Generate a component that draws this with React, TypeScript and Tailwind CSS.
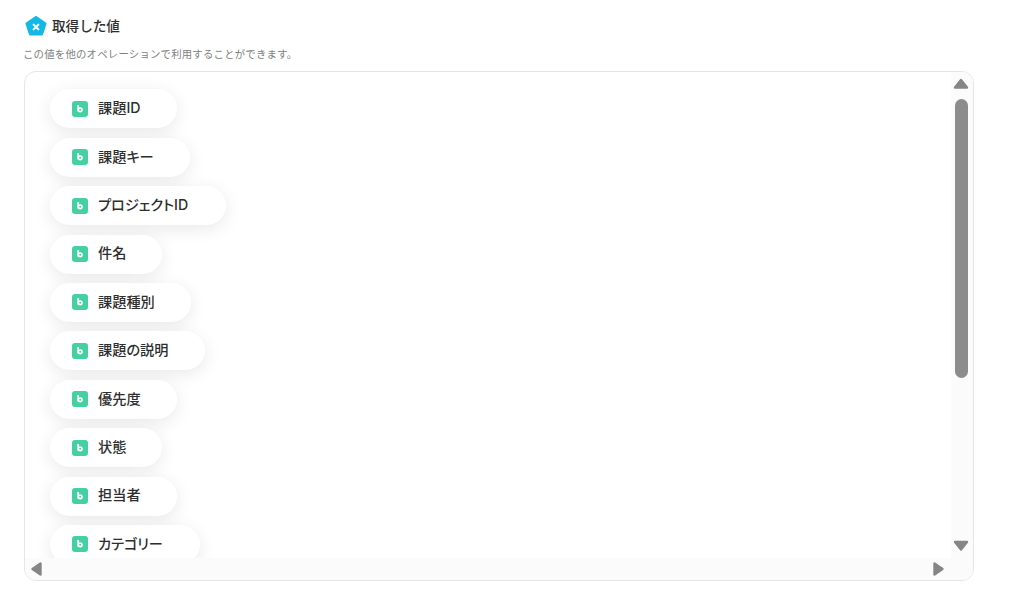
import React from "react";

const FONT = "font-['Inter','Noto_Sans_CJK_JP',sans-serif]";

const items = [
    { label: "課題ID", width: "w-[127px]" },
    { label: "課題キー", width: "w-[140px]" },
    { label: "プロジェクトID", width: "w-[176px]" },
    { label: "件名", width: "w-[112px]" },
    { label: "課題種別", width: "w-[141px]" },
    { label: "課題の説明", width: "w-[155px]" },
    { label: "優先度", width: "w-[127px]" },
    { label: "状態", width: "w-[112px]" },
    { label: "担当者", width: "w-[127px]" },
    { label: "カテゴリー", width: "w-[150px]" },
];

function Arrow({ points, className }: { points: string; className: string }) {
    return (
        <svg viewBox="0 0 16 16" className={className}>
            <polygon points={points} fill="#868686" stroke="#868686" strokeWidth="2.4" strokeLinejoin="round" />
        </svg>
    );
}

function Pill({ label, width }: { label: string; width: string }) {
    return (
        <div className={`flex h-[39px] shrink-0 items-center gap-[10px] rounded-full bg-white pl-[22px] shadow-[0_4px_18px_rgba(0,0,0,0.09)] ${width}`}>
            <div className="flex h-4 w-4 items-center justify-center rounded-[3px] bg-[#45d0a3]">
                <svg viewBox="0 0 16 16" className="h-4 w-4">
                    <path d="M6.2 4V10.6" fill="none" stroke="#fff" strokeWidth="1.7" />
                    <circle cx="8.2" cy="8.8" r="1.8" fill="none" stroke="#fff" strokeWidth="1.6" />
                </svg>
            </div>
            <span className="pb-[2px] text-[14.2px] font-medium text-[#2e2e2e] [font-feature-settings:'palt']">{label}</span>
        </div>
    );
}

export default function App() {
    return (
        <div className={`h-[601px] w-[1017px] overflow-hidden bg-white pl-6 pt-[15px] ${FONT}`}>
            <div className="flex h-[22px] items-center gap-[5px] pl-[1px]">
                <svg viewBox="0 0 22 22" className="h-[22px] w-[22px]">
                    <polygon points="11,2.5 20,8.8 16.6,19 5.4,19 2,8.8" fill="#12b9e6" stroke="#12b9e6" strokeWidth="3" strokeLinejoin="round" />
                    <path d="M8.6 9.6L13.4 14.4M13.4 9.6L8.6 14.4" stroke="#fff" strokeWidth="2" strokeLinecap="round" />
                </svg>
                <span className="text-[13.6px] font-medium text-[#2e2e2e]">取得した値</span>
            </div>
            <p className="-ml-[1px] mt-[10px] h-4 text-[10.4px] leading-4 tracking-[0.02em] text-[#808080]">この値を他のオペレーションで利用することができます。</p>
            <div className="mt-[8px] flex h-[510px] w-[950px] flex-col overflow-hidden rounded-xl border border-[#e6e6e6]">
                <div className="flex min-h-0 flex-1">
                    <div className="flex min-w-0 flex-1 flex-col gap-[9.4px] overflow-hidden pl-[25px] pt-[17.4px]">
                        {items.map((item) => (
                            <Pill key={item.label} label={item.label} width={item.width} />
                        ))}
                    </div>
                    <div className="flex w-[22px] flex-col items-center bg-[#fbfbfb] pr-[2px]">
                        <Arrow points="8,4 14,11.5 2,11.5" className="mt-[4px] h-4 w-4" />
                        <div className="mt-[7px] h-[279px] w-[13px] rounded-full bg-[#8c8c8c]" />
                        <Arrow points="2,4 14,4 8,11.5" className="mt-auto mb-[4px] h-4 w-4" />
                    </div>
                </div>
                <div className="flex h-[22px] shrink-0 items-center justify-between bg-[#fbfbfb] pl-[4px] pr-[27px]">
                    <Arrow points="11.5,2.5 11.5,13.5 3.5,8" className="h-4 w-4" />
                    <Arrow points="4.5,2.5 4.5,13.5 12.5,8" className="h-4 w-4" />
                </div>
            </div>
        </div>
    );
}
